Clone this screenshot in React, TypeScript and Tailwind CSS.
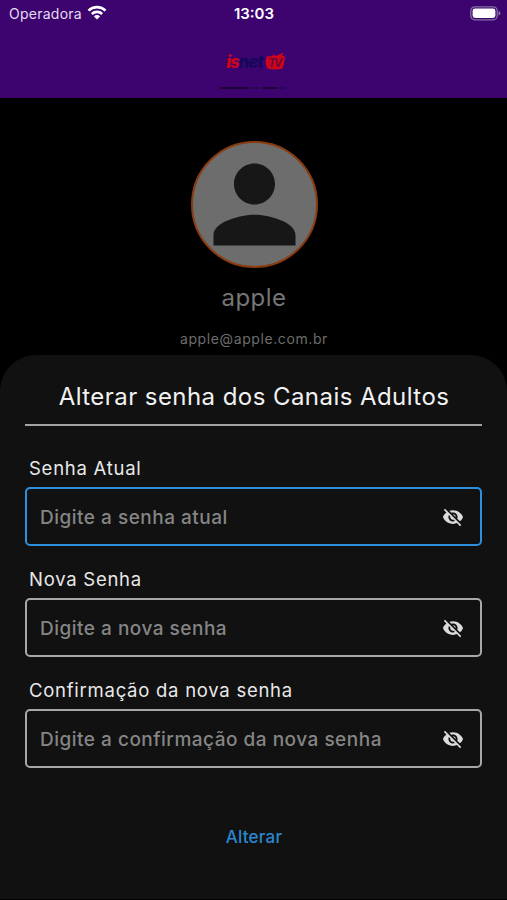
import { MdPerson, MdVisibilityOff } from "react-icons/md";

const fields = [
  { label: "Senha Atual", hint: "Digite a senha atual", focused: true },
  { label: "Nova Senha", hint: "Digite a nova senha", focused: false },
  { label: "Confirmação da nova senha", hint: "Digite a confirmação da nova senha", focused: false },
];

function StatusBar() {
  return (
    <div className="grid h-7 grid-cols-3 items-center pb-px pl-[9px] pr-[6px] text-white">
      <div className="flex items-center gap-[5px] pt-px">
        <span className="text-[14px] leading-none tracking-[0.25px] text-[#e4dcef]">Operadora</span>
        <svg className="mb-[3px] h-[15px] w-5" viewBox="0 0 20 15" fill="none" stroke="#fff" strokeWidth="2.6">
          <path d="M1.5 5.6 A12.2 12.2 0 0 1 18.5 5.6" />
          <path d="M4.8 9 A7.5 7.5 0 0 1 15.2 9" />
          <path d="M10 14.5 L6.9 11.4 A4.4 4.4 0 0 1 13.1 11.4 Z" fill="#fff" stroke="none" />
        </svg>
      </div>
      <span className="pr-[2px] text-center text-[15px] leading-none font-semibold">13:03</span>
      <svg className="h-[15px] w-[31px] justify-self-end" viewBox="0 0 31 15">
        <rect x="0.8" y="0.8" width="26.4" height="13" rx="4" fill="none" stroke="#81719f" strokeWidth="1.3" />
        <rect x="2.6" y="2.6" width="22.8" height="9.4" rx="2.4" fill="#fff" />
        <path d="M28.5 5 Q30.5 5.6 30.5 7.3 Q30.5 9 28.5 9.6 Z" fill="#81719f" />
      </svg>
    </div>
  );
}

function Logo() {
  return (
    <div className="mt-[23px] flex h-[22px] items-center justify-center pl-[4px]">
      <span className="text-[17px] leading-none font-extrabold tracking-[-1.1px] text-[#14085c] italic">
        <span className="text-[#d00418]">is</span>net
      </span>
      <svg className="mb-px ml-[2px] h-[19px] w-[20px]" viewBox="0 0 20 19">
        <path d="M2 4.5 L8 4 L7.5 2 L11 4 L18.5 0.5 L17 4 L19.5 4 Q20 12 17.5 16.5 Q9 18.5 2.5 16.5 Q-1 10 2 4.5 Z" fill="#d00418" />
        <text x="3" y="14.5" fontSize="11.5" fontWeight="600" fontStyle="italic" fill="#5c0a45" textLength="14">
          TV
        </text>
      </svg>
    </div>
  );
}

export default function App() {
  return (
    <div className="flex h-[900px] w-full flex-col overflow-hidden bg-black font-['Inter',sans-serif]">
      <header className="h-[98px] shrink-0 bg-[#3d0470]">
        <StatusBar />
        <Logo />
        {/* worn-out tagline under the logo */}
        <div className="mx-auto mt-[14px] flex h-[2px] w-[68px] gap-[2px] pr-[3px]">
          <div className="w-[29px] bg-[#1c0438]" />
          <div className="w-[9px] bg-[#2c0553]" />
          <div className="w-[15px] bg-[#1c0438]" />
          <div className="w-[6px] bg-[#2c0553]" />
        </div>
      </header>

      <section className="flex h-[257px] shrink-0 flex-col items-center pt-[43px] pl-px">
        <div className="flex size-[127px] items-center justify-center overflow-hidden rounded-full border-2 border-[#8a3b10] bg-[#6d6d6d]">
          <MdPerson className="size-[123px] shrink-0 text-[#171717]" />
        </div>
        <p className="mt-[15px] text-[24px] leading-[30px] tracking-[0.5px] text-[#757575]">apple</p>
        <p className="mt-[17px] text-[14px] leading-[18px] tracking-[0.6px] text-[#6c6c6c]">apple@apple.com.br</p>
      </section>

      <main className="mb-px flex grow flex-col rounded-t-[36px] bg-[#111111] px-[25px]">
        <h1 className="mt-[27px] pl-px text-center text-[24px] leading-[30px] tracking-[0.44px] text-[#f2f2f2]">
          Alterar senha dos Canais Adultos
        </h1>
        <hr className="mt-[12px] border-t-2 border-[#a3a3a3]" />

        <form className="mt-[29px] flex flex-col gap-[20px]">
          {fields.map((field) => (
            <div key={field.label}>
              <label className="block pl-1 text-[18.5px] leading-[26px] tracking-[0.74px] text-[#e8e8e8]">
                {field.label}
              </label>
              <div
                className={`mt-[6px] flex h-[59px] items-center justify-between rounded-[5px] border-2 pr-[16px] pl-[13px] ${
                  field.focused ? "border-[#2e8fdc]" : "border-[#a8a8a8]"
                }`}
              >
                <span className="pt-[3px] text-[19px] font-medium tracking-[0.5px] text-[#858585]">{field.hint}</span>
                <MdVisibilityOff className="size-[22px] text-[#dcdcdc]" />
              </div>
            </div>
          ))}
        </form>

        <button type="button" className="mt-[57px] self-center pl-px text-[17px] leading-6 font-medium tracking-[0.25px] text-[#2b87d0]">
          Alterar
        </button>
      </main>
    </div>
  );
}
